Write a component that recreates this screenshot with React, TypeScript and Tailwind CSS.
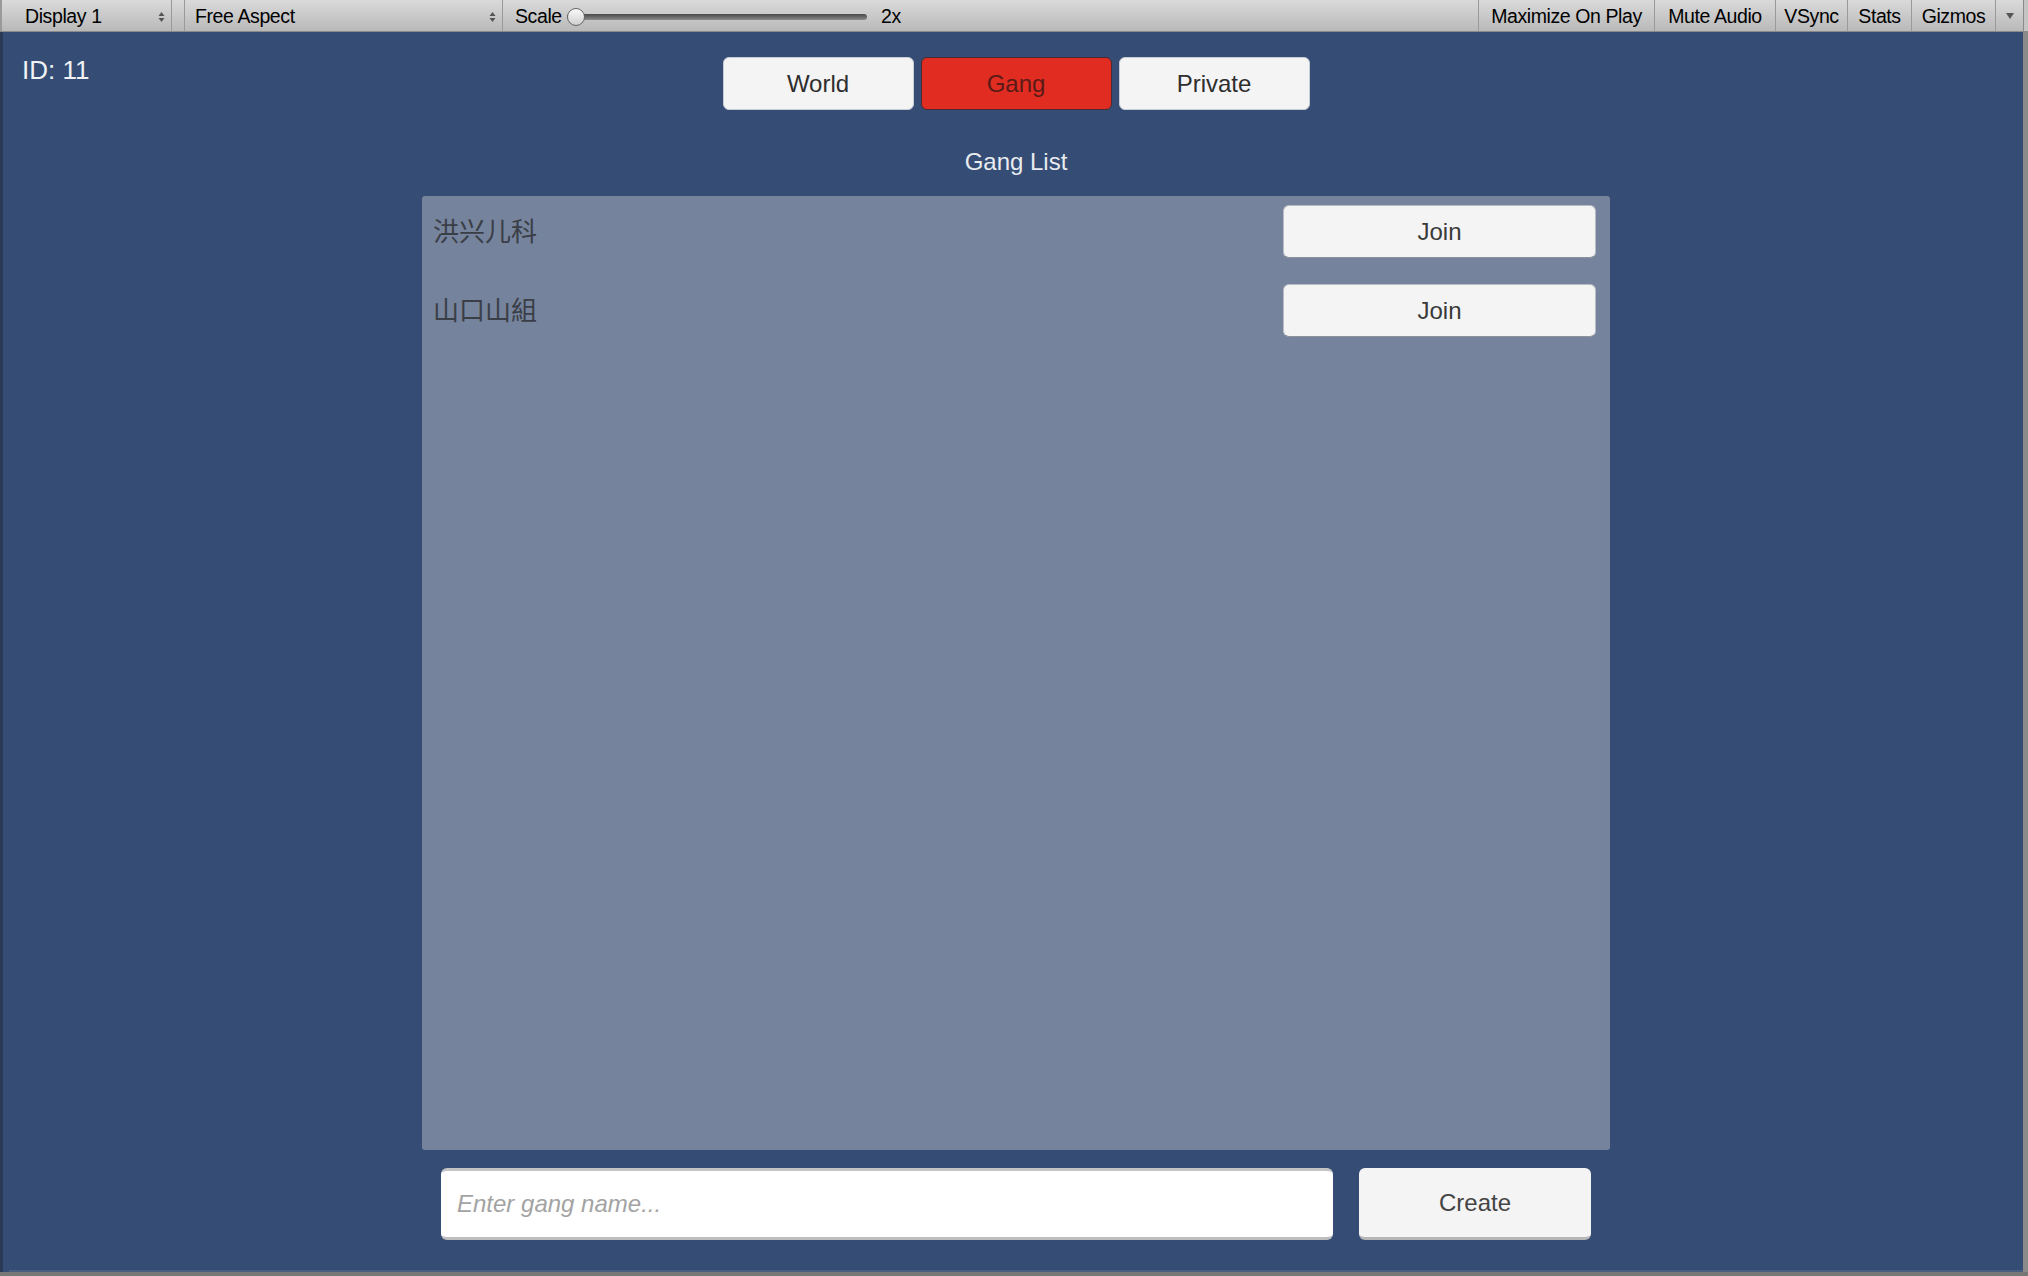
import { useState } from 'react';

const toolbarText = "text-[19.5px] text-black font-['Liberation_Sans','DejaVu_Sans',sans-serif] tracking-[-0.4px] pt-[2px]";

const Updown = () => (
  <svg width="7" height="12" viewBox="0 0 7 12" className="shrink-0">
    <path d="M0.5 5 L3.5 1 L6.5 5 Z" fill="#555" />
    <path d="M0.5 7 L3.5 11 L6.5 7 Z" fill="#555" />
  </svg>
);

const Toolbar = () => (
  <div className="h-[32px] flex items-stretch bg-gradient-to-b from-[#dadada] to-[#b9b9b9] border-b border-[#8a8a8a]">
    <div className="w-[2px] bg-[#9a9a9a]" />
    <div className={`w-[170px] flex items-center justify-between pl-[23px] pr-[6px] border-r border-[#9a9a9a] ${toolbarText}`}>
      <span>Display 1</span>
      <Updown />
    </div>
    <div className="w-[13px] border-r border-[#9a9a9a]" />
    <div className={`w-[318px] flex items-center justify-between pl-[10px] pr-[6px] border-r border-[#9a9a9a] ${toolbarText}`}>
      <span>Free Aspect</span>
      <Updown />
    </div>
    <div className={`flex items-center pl-[12px] ${toolbarText}`}>
      <span className="w-[52px]">Scale</span>
      <div className="relative w-[300px] h-[18px] flex items-center">
        <div className="w-full h-[6px] rounded-full bg-gradient-to-b from-[#4a4a4a] to-[#8a8a8a]" />
        <div className="absolute left-[0px] top-0 w-[18px] h-[18px] rounded-full border border-[#666] bg-gradient-to-b from-[#fafafa] to-[#d0d0d0]" />
      </div>
      <span className="ml-[14px]">2x</span>
    </div>
    <div className="flex-1" />
    <div className={`flex items-stretch ${toolbarText.replace('pt-[2px]', '')}`}>
      <div className="w-[176px] pt-[2px] flex items-center justify-center border-l border-[#9a9a9a]">Maximize On Play</div>
      <div className="w-[121px] pt-[2px] flex items-center justify-center border-l border-[#9a9a9a]">Mute Audio</div>
      <div className="w-[72px] pt-[2px] flex items-center justify-center border-l border-[#9a9a9a]">VSync</div>
      <div className="w-[64px] pt-[2px] flex items-center justify-center border-l border-[#9a9a9a]">Stats</div>
      <div className="w-[84px] pt-[2px] flex items-center justify-center border-l border-[#9a9a9a]">Gizmos</div>
      <div className="w-[28px] flex items-center justify-center border-l border-[#9a9a9a]">
        <svg width="8" height="6" viewBox="0 0 8 6"><path d="M0 0 L8 0 L4 6 Z" fill="#555" /></svg>
      </div>
      <div className="w-[5px] border-l border-[#8a8a8a] bg-[#c4c4c4]" />
    </div>
  </div>
);

const ui = "font-['Liberation_Sans','Noto_Sans_CJK_SC',sans-serif]";

const Tab = ({ label, active, onClick }: { label: string; active: boolean; onClick: () => void }) => (
  <button
    onClick={onClick}
    className={`w-[191px] h-[53px] rounded-[6px] text-[24px] ${ui} ${
      active
        ? 'bg-[#e12d21] text-[#5a1a17] border border-[#4a2a35]'
        : 'bg-[#f4f4f4] text-[#2e2e2e] border border-[#c8ccd4]'
    }`}
  >
    {label}
  </button>
);

const gangs = ['洪兴儿科', '山口山組'];

export default function App() {
  const [tab, setTab] = useState('Gang');

  return (
    <div className={`w-[2028px] h-[1276px] flex flex-col bg-[#6e6e6e] overflow-hidden ${ui}`}>
      <Toolbar />
      <div className="flex-1 flex">
        <div className="w-[3px] bg-[#2a3a55]" />
        <main className="w-[2020px] bg-[#354d74] flex flex-col pl-[6px]">
          <div className="grid grid-cols-[1fr_auto_1fr] pt-[25px]">
            <div className="pl-[13px] pt-[0px] text-[26px] text-[#f0f2f5] leading-none">ID: 11</div>
            <div className="flex gap-[7px]">
              {['World', 'Gang', 'Private'].map((t) => (
                <Tab key={t} label={t} active={tab === t} onClick={() => setTab(t)} />
              ))}
            </div>
            <div />
          </div>

          <div className="mt-[38px] text-center text-[24px] leading-[28px] text-[#e8ebf0]">Gang List</div>

          <div className="mx-auto mt-[20px] w-[1188px] h-[954px] bg-[#75839c] rounded-[3px] pt-[9px] pl-[11px] pr-[14px] flex flex-col gap-[26px]">
            {gangs.map((g) => (
              <div key={g} className="flex items-center justify-between h-[53px]">
                <span className="text-[26px] text-[#3a3e46] font-['Noto_Sans_CJK_SC',sans-serif] -mt-[4px]">{g}</span>
                <button className="w-[313px] h-[53px] rounded-[6px] bg-[#f4f4f4] border border-[#b7bcc4] border-b-[#8d929a] text-[24px] text-[#3a3a3a]">
                  Join
                </button>
              </div>
            ))}
          </div>

          <div className="mx-auto mt-[18px] w-[1150px] flex gap-[26px]">
            <div className="w-[892px] h-[72px] rounded-[6px] bg-white border-t-[3px] border-t-[#c4c4c4] border-b-[3px] border-b-[#bdbdbd] flex items-center pl-[16px]">
              <input
                placeholder="Enter gang name..."
                className="w-full bg-transparent outline-none text-[24px] italic text-[#333] placeholder:text-[#a3a3a3]"
              />
            </div>
            <button className="w-[232px] h-[72px] rounded-[6px] bg-[#f4f4f4] border-b-[3px] border-b-[#b5b5b5] text-[24px] text-[#444]">
              Create
            </button>
          </div>
          <div className="flex-1" />
          <div className="h-[2px] bg-[#4a5f80]" />
        </main>
        <div className="flex-1 bg-[#8a8a8a]" />
      </div>
      <div className="h-[4px] bg-[#777]" />
    </div>
  );
}
